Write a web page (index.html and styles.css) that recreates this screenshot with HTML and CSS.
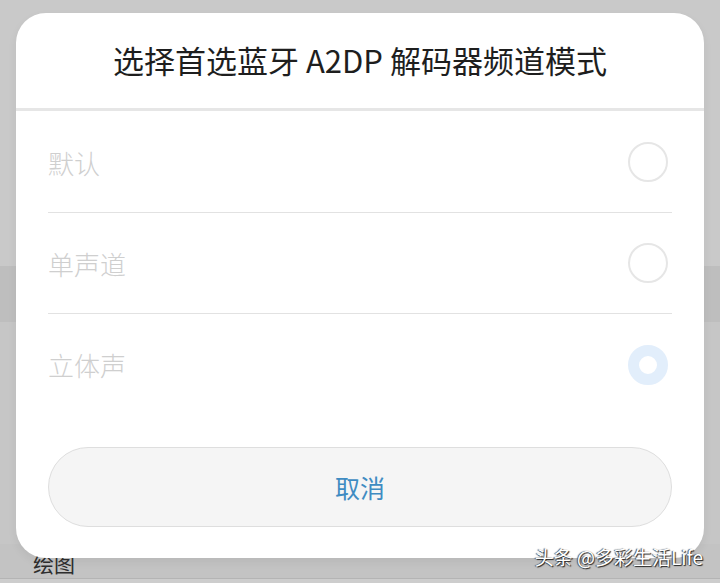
FILE: index.html
```html
<!DOCTYPE html>
<html lang="zh-CN">
<head>
    <meta charset="UTF-8">
    <meta name="viewport" content="width=device-width, initial-scale=1.0">
    <title>A2DP 解码器频道模式</title>
    <link rel="stylesheet" href="styles.css">
</head>
<body>

    <!-- Settings page behind the dimmed overlay -->
    <div class="backdrop">
        <div class="bg-top"></div>
        <div class="bg-band"></div>
        <div class="bg-middle"></div>
        <div class="bg-bottom">
            <span class="bg-label">绘图</span>
        </div>
        <div class="bg-foot"></div>
    </div>

    <!-- Choice dialog -->
    <div class="dialog">
        <h1 class="dialog-title">选择首选蓝牙 A2DP 解码器频道模式</h1>
        <ul class="options">
            <li class="option">
                <span class="option-label">默认</span>
                <span class="radio"></span>
            </li>
            <li class="option">
                <span class="option-label">单声道</span>
                <span class="radio"></span>
            </li>
            <li class="option">
                <span class="option-label">立体声</span>
                <span class="radio checked"></span>
            </li>
        </ul>
        <button class="cancel-btn">取消</button>
    </div>

    <div class="watermark">头条 @多彩生活Life</div>

</body>
</html>
```

FILE: styles.css
```css
* {
    margin: 0;
    padding: 0;
    box-sizing: border-box;
}

body {
    width: 720px;
    height: 583px;
    overflow: hidden;
    position: relative;
    font-family: "Noto Sans CJK SC", "Noto Sans", sans-serif;
    background-color: #c8c8c8;
}

/* background page */
.backdrop {
    display: flex;
    flex-direction: column;
    height: 583px;
}

.bg-top {
    height: 266px;
    background-color: #c9c9c9;
}

.bg-band {
    height: 56px;
    background-color: #bebebe;
}

.bg-middle {
    height: 222px;
    background-color: #c6c6c6;
}

.bg-bottom {
    height: 34px;
    background-color: #c3c3c3;
    padding-left: 33px;
    display: flex;
    align-items: flex-end;
}

.bg-label {
    font-size: 21px;
    line-height: 30px;
    color: #2e2e2e;
}

.bg-foot {
    flex: 1;
    border-top: 1px solid #b4b4b4;
    background-color: #cdcdcd;
}

/* dialog */
.dialog {
    position: absolute;
    top: 13px;
    left: 16px;
    width: 688px;
    height: 545px;
    background-color: #fff;
    border-radius: 30px;
    display: flex;
    flex-direction: column;
    box-shadow: 0 4px 10px rgba(0, 0, 0, 0.06);
}

.dialog-title {
    height: 98px;
    padding-bottom: 3px;
    display: flex;
    align-items: center;
    justify-content: center;
    font-size: 31px;
    font-weight: 400;
    color: #1e1e1e;
    border-bottom: 3px solid #e6e6e6;
}

.options {
    list-style: none;
    padding: 1px 32px 0;
}

.option {
    height: 101px;
    display: flex;
    align-items: center;
    justify-content: space-between;
    border-bottom: 1px solid #e2e2e2;
}

.option:last-child {
    border-bottom: none;
}

.option-label {
    font-size: 26px;
    font-weight: 300;
    color: #cfcfcf;
}

.radio {
    width: 40px;
    height: 40px;
    margin-right: 4px;
    border-radius: 50%;
    border: 2px solid #e6e6e6;
}

.radio.checked {
    border: 11px solid #e2eefb;
}

.cancel-btn {
    margin: 32px 32px 0;
    height: 80px;
    border-radius: 40px;
    border: 1px solid #dedede;
    background-color: #f5f5f5;
    font-family: inherit;
    font-size: 25px;
    color: #3f8cc2;
}

.watermark {
    position: absolute;
    right: 17px;
    top: 543px;
    font-size: 19px;
    color: #fff;
    text-shadow: 1px 1px 1px #222, -1px 0 1px #444;
}
```
